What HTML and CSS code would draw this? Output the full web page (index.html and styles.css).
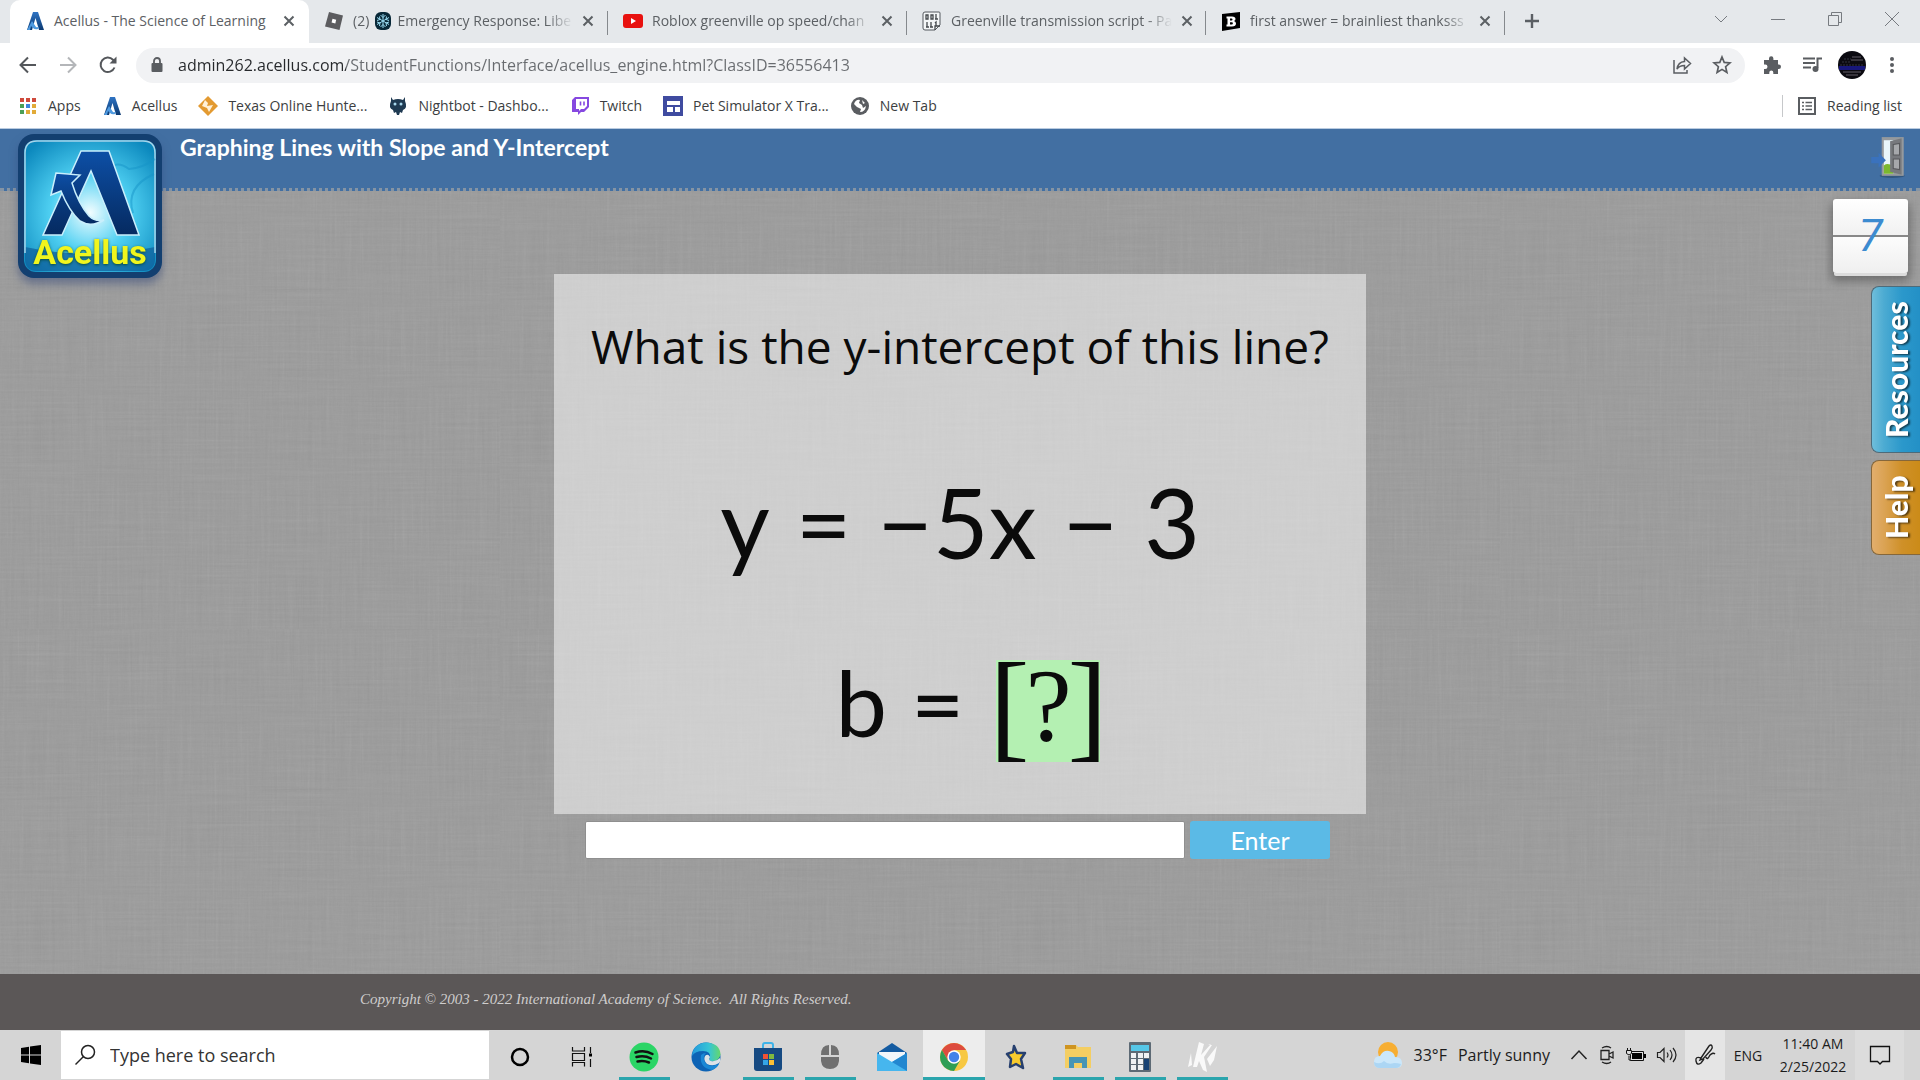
FILE: index.html
```html
<!DOCTYPE html>
<html lang="en">
<head>
    <meta charset="UTF-8">
    <meta name="viewport" content="width=device-width, initial-scale=1.0">
    <title>Acellus - The Science of Learning</title>
    <link rel="stylesheet" href="styles.css">
</head>
<body>
    <!-- Shared shapes -->
    <svg class="defs" width="0" height="0" aria-hidden="true">
        <defs>
            <linearGradient id="aBlue" x1="0" y1="0" x2="0" y2="1">
                <stop offset="0" stop-color="#2f74c4"/>
                <stop offset="1" stop-color="#0c3a72"/>
            </linearGradient>
            <symbol id="acellus" viewBox="0 0 18 20">
                <path d="M7 1h5l6 18h-5L9.500 7 6 19H1z" fill="url(#aBlue)"/>
                <path d="M1 19 6 10l4 6q2 1 3-1l-1 3q-3 1-5-1L5 15l-1 4z" fill="#4f9ae0"/>
            </symbol>
            <symbol id="close" viewBox="0 0 12 12">
                <path d="M1.500 1.500l9 9M10.500 1.500l-9 9" stroke="currentColor" stroke-width="2" fill="none"/>
            </symbol>
        </defs>
    </svg>

    <!-- Browser tabs -->
    <div class="tab-strip">
        <div class="tab active">
            <svg class="favicon"><use href="#acellus"/></svg>
            <span class="tab-title">Acellus - The Science of Learning</span>
            <button class="tab-close" aria-label="Close tab"><svg width="12" height="12"><use href="#close"/></svg></button>
        </div>
        <div class="tab">
            <svg class="favicon" viewBox="0 0 20 20"><path d="M5 1l14 3.500L15.500 19 1 15.500z" fill="#5c5c5f"/><path d="M8.500 7.800l3.700.9-.9 3.700-3.700-.9z" fill="#fff"/></svg>
            <span class="tab-title">(2) <svg class="snow" viewBox="0 0 16 18"><rect width="16" height="18" rx="6" fill="#082838"/><path d="M8 2v14M2 5.500l12 7M14 5.500l-12 7M5.500 3L8 5.500 10.500 3M5.500 15L8 12.500l2.500 2.500M2 8.500l3-1-.5-3M14 8.500l-3-1 .5-3M2 10l3 1-.5 3M14 10l-3 1 .5 3" stroke="#9bdcf2" fill="none"/></svg> Emergency Response: Libe</span>
            <button class="tab-close" aria-label="Close tab"><svg width="12" height="12"><use href="#close"/></svg></button>
        </div>
        <div class="tab">
            <svg class="favicon" viewBox="0 0 20 20"><rect y="3" width="20" height="14" rx="3" fill="#e8110f"/><path d="M8 7l5 3-5 3z" fill="#fff"/></svg>
            <span class="tab-title">Roblox greenville op speed/chan</span>
            <button class="tab-close" aria-label="Close tab"><svg width="12" height="12"><use href="#close"/></svg></button>
        </div>
        <div class="tab">
            <svg class="favicon" viewBox="0 0 20 20"><path d="M3 1h14q1 0 1 1v12l-5 5H3q-2 0-2-2V3q0-2 2-2z" fill="#f4f6f7" stroke="#55595e"/><path d="M4 4h2v4H4zM9 4h2v4H9zM14 3v5M13 8h3M5 11v5M4 16h3M9 11v5M8 16h3M13 12l1-1v4M13 19v-4h5" fill="none" stroke="#44484c" stroke-width="1.300"/></svg>
            <span class="tab-title">Greenville transmission script - Pa</span>
            <button class="tab-close" aria-label="Close tab"><svg width="12" height="12"><use href="#close"/></svg></button>
        </div>
        <div class="tab">
            <svg class="favicon" viewBox="0 0 20 20"><path d="M1 3l18-2v16L1 20z" fill="#000"/><path d="M5.500 5.500h5.500q3.500 0 3.500 2.500 0 1.500-1.500 2 2 .5 2 2.500 0 3-4 3H5.500v-2h1v-6h-1zM9 7.500v2h1.500q1 0 1-1t-1-1zm0 3.700v2.300h1.700q1.200 0 1.200-1.200t-1.200-1.100z" fill="#fff"/></svg>
            <span class="tab-title">first answer = brainliest thanksss</span>
            <button class="tab-close" aria-label="Close tab"><svg width="12" height="12"><use href="#close"/></svg></button>
        </div>
        <button class="new-tab" aria-label="New tab"><svg width="16" height="16" viewBox="0 0 16 16"><path d="M8 1v14M1 8h14" stroke="#5b5f64" stroke-width="2.400"/></svg></button>
        <div class="window-controls">
            <button aria-label="Search tabs"><svg width="16" height="16" viewBox="0 0 16 16"><path d="M2 5l6 6 6-6" fill="none" stroke="#777b80"/></svg></button>
            <button aria-label="Minimize"><svg width="16" height="16" viewBox="0 0 16 16"><path d="M1 8.500h14" stroke="#777b80"/></svg></button>
            <button aria-label="Restore"><svg width="16" height="16" viewBox="0 0 16 16"><path d="M1.500 4.500h10v10h-10zM4.500 4.500v-3h10v10h-3" fill="none" stroke="#777b80"/></svg></button>
            <button aria-label="Close"><svg width="16" height="16" viewBox="0 0 16 16"><path d="M1 1l14 14M15 1L1 15" stroke="#777b80"/></svg></button>
        </div>
    </div>

    <!-- Address bar -->
    <div class="toolbar">
        <button class="nav" aria-label="Back"><svg width="20" height="20" viewBox="0 0 20 20"><path d="M18 10H3M10 2.500L2.500 10l7.500 7.500" fill="none" stroke="#54575b" stroke-width="2"/></svg></button>
        <button class="nav" aria-label="Forward"><svg width="20" height="20" viewBox="0 0 20 20"><path d="M2 10h15M10 2.500l7.500 7.500-7.500 7.500" fill="none" stroke="#b4b6b9" stroke-width="2"/></svg></button>
        <button class="nav" aria-label="Reload"><svg width="20" height="20" viewBox="0 0 20 20"><path d="M16.500 12.500A7.200 7.200 0 1 1 15 4.800L17 7" fill="none" stroke="#54575b" stroke-width="2"/><path d="M18.500 1.500v7h-7z" fill="#54575b"/></svg></button>
        <div class="omnibox">
            <svg width="14" height="18" viewBox="0 0 14 18"><rect x="1.500" y="7" width="11" height="9" rx="1" fill="#5a5d61"/><path d="M4 8V5a3 3 0 0 1 6 0v3" fill="none" stroke="#5a5d61" stroke-width="1.800"/></svg>
            <input class="url" type="text" aria-label="Address" value="admin262.acellus.com/StudentFunctions/Interface/acellus_engine.html?ClassID=36556413">
            <button aria-label="Share"><svg width="20" height="20" viewBox="0 0 20 20"><path d="M2 5v13h13v-3M12.500 3v3.500Q6 7 5 14q2.500-3.500 7.500-3.500V14L18.500 8.500z" fill="none" stroke="#5a5d61" stroke-width="1.500"/></svg></button>
            <button aria-label="Bookmark"><svg width="20" height="20" viewBox="0 0 20 20"><path d="M10 2l2.200 5.400 5.800.5-4.400 3.800 1.300 5.700-4.900-3-4.900 3 1.300-5.700L2 7.900l5.800-.5z" fill="none" stroke="#5a5d61" stroke-width="1.700"/></svg></button>
        </div>
        <div class="tools">
            <button aria-label="Extensions"><svg width="20" height="20" viewBox="0 0 20 20"><path d="M2 5h5V3.500a2.200 2.200 0 0 1 4.400 0V5H16v4.500h.8a2.200 2.200 0 0 1 0 4.400H16V19h-4.700v-1.500a2 2 0 0 0-4 0V19H2v-5h1.300a2.200 2.200 0 0 0 0-4.400H2z" fill="#5a5d61"/></svg></button>
            <button aria-label="Media"><svg width="20" height="20" viewBox="0 0 20 20"><path d="M1 3.500h12M1 8h12M1 12.500h8" stroke="#5a5d61" stroke-width="2"/><path d="M15.500 13V3.500H20" fill="none" stroke="#5a5d61" stroke-width="2"/><circle cx="13.500" cy="14" r="3" fill="#5a5d61"/></svg></button>
            <button aria-label="Profile"><svg width="28" height="28" viewBox="0 0 28 28"><circle cx="14" cy="14" r="14" fill="#0b0a10"/><path d="M14 6h9M13 9h12M5 21h18M8 24h12" stroke="#454149" stroke-width="1.500"/><path d="M1 17h26" stroke="#17177a" stroke-width="4"/><path d="M6 8h7M4 11h9M2 14h24" stroke="#33333c" stroke-dasharray="2 1"/></svg></button>
            <button aria-label="Menu"><svg width="6" height="18" viewBox="0 0 6 18"><g fill="#5a5d61"><circle cx="3" cy="3" r="2"/><circle cx="3" cy="9" r="2"/><circle cx="3" cy="15" r="2"/></g></svg></button>
        </div>
    </div>

    <!-- Bookmarks -->
    <nav class="bookmarks">
        <a href="#"><svg viewBox="0 0 20 20"><path d="M2 2h4v4H2zM8 2h4v4H8zM14 2h4v4h-4z" fill="#cf4a3c"/><path d="M2 8h4v4H2z" fill="#4b9f57"/><path d="M8 8h4v4H8z" fill="#3d84dd"/><path d="M14 8h4v4h-4zM8 14h4v4H8zM14 14h4v4h-4z" fill="#e2ab38"/><path d="M2 14h4v4H2z" fill="#4b9f57"/></svg>Apps</a>
        <a href="#"><svg><use href="#acellus"/></svg>Acellus</a>
        <a href="#"><svg viewBox="0 0 20 20"><path d="M10 0l10 10-10 10L0 10z" fill="#e39a31"/><path d="M7 4l3 3-1 3 6-1-4 7-2-4-5-2z" fill="#fff1d8"/></svg>Texas Online Hunte...</a>
        <a href="#"><svg viewBox="0 0 20 20"><path d="M3 1l2 3q5-2 10 0l2-3v4q3 7-2 9l-1 3-2-1-1 3H9l-1-3-2 1-1-3q-5-2-2-9z" fill="#1f3a52"/><circle cx="7" cy="8" r="1.500" fill="#a9d8ee"/><circle cx="13" cy="8" r="1.500" fill="#a9d8ee"/></svg>Nightbot - Dashbo...</a>
        <a href="#"><svg viewBox="0 0 20 20"><path d="M5 1h14v10l-5 5h-3l-3 3v-3H2V4z" fill="#8648e0"/><path d="M6 3h11v7l-3 3h-3l-2 2v-2H6z" fill="#fff"/><path d="M10.500 5.500v4M14 5.500v4" stroke="#8648e0" stroke-width="1.600"/></svg>Twitch</a>
        <a href="#"><svg viewBox="0 0 20 20"><rect width="20" height="20" fill="#3f4ba0"/><path d="M4 5h13v4H4zM4 11h6v5H4zM12 11h5v5h-5z" fill="#fff"/></svg>Pet Simulator X Tra...</a>
        <a href="#"><svg viewBox="0 0 20 20"><circle cx="10" cy="10" r="9" fill="#5a5d61"/><path d="M4 8q2-5 6-4l-1 3 3 2 1 3 3-2q-1 6-6 6l1-3-4-2zM12 4l3 3-2 1z" fill="#fff"/></svg>New Tab</a>
        <button class="reading-list"><svg viewBox="0 0 20 20"><rect x="2" y="2" width="16" height="16" fill="none" stroke="#5a5d61" stroke-width="2"/><path d="M5 6.500h2M8.500 6.500H15M5 10h2M8.500 10H15M5 13.500h2M8.500 13.500H15" stroke="#5a5d61" stroke-width="1.600"/></svg>Reading list</button>
    </nav>

    <!-- Lesson -->
    <main class="lesson">
        <header class="lesson-header">
            <h1>Graphing Lines with Slope and Y-Intercept</h1>
            <button class="exit" aria-label="Exit"><svg width="36" height="44" viewBox="0 0 34 42"><ellipse cx="21" cy="39" rx="12" ry="2" fill="#33577f"/><path d="M11 2h21v37H11z" fill="#95999d"/><path d="M13 5h9v32h-9z" fill="#e9f6fb"/><path d="M13 29q4-3 9 1v7h-9z" fill="#7cb82f"/><path d="M19 6l11-3v35l-11-3z" fill="#77797d"/><path d="M22 9l6-1v11h-6zM22 23h6v10l-6-1z" fill="#a6a8ab" stroke="#58595c"/><path d="M1 21h7v-4l7 7-7 7v-4H1z" fill="#3a72bd"/></svg></button>
        </header>

        <a class="logo" href="#" aria-label="Acellus">
            <svg viewBox="0 0 146 146">
                <defs>
                    <radialGradient id="glow" cx=".5" cy=".55" r=".66">
                        <stop offset="0" stop-color="#f2fdff"/>
                        <stop offset=".45" stop-color="#4fd0f2"/>
                        <stop offset="1" stop-color="#0b88bd"/>
                    </radialGradient>
                    <linearGradient id="letter" x1="0" y1="0" x2="0" y2="1">
                        <stop offset="0" stop-color="#0d4fa6"/>
                        <stop offset="1" stop-color="#052a60"/>
                    </linearGradient>
                </defs>
                <rect x="1" y="1" width="144" height="144" rx="16" fill="#133f70"/>
                <rect x="7" y="7" width="132" height="132" rx="12" fill="url(#glow)"/>
                <path d="M8 114q65 14 130 0v12q0 12-12 12H20q-12 0-12-12z" fill="#0e5c9a" opacity=".7"/>
                <path d="M8 120V20Q8 8 20 8h106q12 0 12 12v100" fill="none" stroke="#a5d4ea" stroke-width="1.500"/>
                <path d="M92 34q10-6 20 2 14-1 26-10M116 80q-8-26 21-39" fill="none" stroke="#1593c8" stroke-width="2" opacity=".5"/>
                <path d="M64 18h28l30 84h-22L74 38 45 102H26z" fill="url(#letter)" stroke="#c9effc" stroke-width="1.500"/>
                <path d="M39 40l24 2-8 8q6 20 17 33 6 6 15 4-13 8-24 1Q52 78 44 58l-10 4z" fill="url(#letter)" stroke="#c9effc" stroke-width="1.500"/>
            </svg>
            <span>Acellus</span>
        </a>

        <div class="side">
            <div class="counter"><span>7</span></div>
            <button class="side-tab resources">Resources</button>
            <button class="side-tab help">Help</button>
        </div>

        <form class="question">
            <div class="card">
                <h2>What is the y-intercept of this line?</h2>
                <div class="equation">
                    <span>y</span><span>=</span><span>−5x</span><span>−</span><span>3</span>
                </div>
                <div class="equation answer-line">
                    <span>b</span><span>=</span>
                    <span class="blank"><span class="bracket">[</span><span>?</span><span class="bracket">]</span></span>
                </div>
            </div>
            <div class="answer">
                <input type="text" aria-label="Answer">
                <button type="button">Enter</button>
            </div>
        </form>
    </main>

    <footer class="copyright">Copyright © 2003 - 2022 International Academy of Science.&nbsp; All Rights Reserved.</footer>

    <!-- Taskbar -->
    <div class="taskbar">
        <button class="start" aria-label="Start"><svg width="20" height="20" viewBox="0 0 20 20"><path d="M0 3l8-1.200V9.500H0zM9 1.600L20 0v9.500H9zM0 10.500h8v7.700L0 17zM9 10.500h11V20L9 18.400z"/></svg></button>
        <div class="search">
            <svg width="22" height="22" viewBox="0 0 22 22"><circle cx="14" cy="8" r="6.500" fill="none" stroke="#222" stroke-width="1.500"/><path d="M9.500 12.500L1.500 20.500" stroke="#222" stroke-width="1.500"/></svg>
            <input type="text" aria-label="Search" placeholder="Type here to search">
        </div>
        <div class="apps">
            <button aria-label="Cortana"><svg viewBox="0 0 30 30"><circle cx="15" cy="15" r="8" fill="none" stroke="#000" stroke-width="2.500"/></svg></button>
            <button aria-label="Task view"><svg viewBox="0 0 30 30"><path d="M5.500 5v4h12V5M5.500 24.500v-4h12v4M5.500 11.500h12v7h-12zM23.500 5v6M23.500 17v8" fill="none" stroke="#111" stroke-width="1.200"/><path d="M22 11.500h3v3h-3z"/></svg></button>
            <button class="open" aria-label="Spotify"><svg viewBox="0 0 30 30"><circle cx="15" cy="15" r="14.500" fill="#2bd566"/><path d="M6.500 10.500q9-3 17 1.500M7.500 15q8-2 14.500 1.500M8.500 19.500q6-1.500 11.500 1" fill="none" stroke="#111" stroke-width="2.500" stroke-linecap="round"/></svg></button>
            <button aria-label="Edge"><svg viewBox="0 0 30 30"><defs><linearGradient id="edge" x1="0" x2="1"><stop offset="0" stop-color="#2499dc"/><stop offset=".6" stop-color="#37c4d5"/><stop offset="1" stop-color="#65d86b"/></linearGradient></defs><circle cx="15" cy="15" r="14.500" fill="#0d63b5"/><path d="M1 14Q2 1 16 .5q13 1 13.500 12Q28 20 20 19q-3-1-1-3 1-7-7-7Q4 9 1 14z" fill="url(#edge)"/><path d="M10 13q-2 13 11 15 5-2 7-6-12 5-15-4-1-4 2-7-3 0-5 2z" fill="#1a88d6"/><path d="M14 14q3-3 5 1-2 3 1 4 5 1 9-3 1 3-1 5-6 4-12 1-4-4-2-8z" fill="#dbe3e8"/></svg></button>
            <button class="open" aria-label="Microsoft Store"><svg viewBox="0 0 30 30"><path d="M10 6V3q0-2 2-2h6q2 0 2 2v3" fill="none" stroke="#3eb3e8" stroke-width="2"/><path d="M1 6h28v20q0 3-3 3H4q-3 0-3-3z" fill="#164a82"/><path d="M10 12h5v5h-5z" fill="#f05133"/><path d="M16 12h5v5h-5z" fill="#7fba3f"/><path d="M10 18h5v5h-5z" fill="#35a5e6"/><path d="M16 18h5v5h-5z" fill="#fbc034"/></svg></button>
            <button class="open" aria-label="Mouse"><svg viewBox="0 0 30 30"><path d="M14 3v10H6q0-10 8-10zM16 3q8 0 8 10h-8zM6 15h18v4q-1 8-9 8t-9-8z" fill="#707070"/></svg></button>
            <button aria-label="Mail"><svg viewBox="0 0 30 30"><path d="M0 11L15 1l15 10v8H0z" fill="#145ba1"/><path d="M2 10h26v12H2z" fill="#f2f6fa"/><path d="M0 11l15 9 15-9v18H0z" fill="#46b6ee"/><path d="M15 20l15 9V11z" fill="#2287d0"/></svg></button>
            <button class="open current" aria-label="Chrome"><svg viewBox="0 0 30 30"><circle cx="15" cy="15" r="14" fill="#f7c843"/><path d="M2.900 8A14 14 0 0 1 27.100 8H15L9 18.500z" fill="#dd4b3e"/><path d="M2.900 8A14 14 0 0 0 15 29l6-10.500q-6 5-12 0z" fill="#2f9e55"/><circle cx="15" cy="15" r="6.700" fill="#fff"/><circle cx="15" cy="15" r="5.200" fill="#4382ea"/></svg></button>
            <button aria-label="Star"><svg viewBox="0 0 30 30"><path d="M13 4l3 7 8 0-4 6 2 9-7-4-6 3 1-8-4-5 6-2z" fill="#f8cb2e" stroke="#27406f" stroke-width="2.500" stroke-linejoin="round"/></svg></button>
            <button class="open" aria-label="File Explorer"><svg viewBox="0 0 30 30"><path d="M2 3h11l2 2h13v21H2z" fill="#f4ce62"/><path d="M2 3h11v4H2z" fill="#cf9420"/><path d="M6 26V15h18v11h-5v-5h-8v5z" fill="#4795b5"/></svg></button>
            <button class="open" aria-label="Calculator"><svg viewBox="0 0 30 30"><rect x="4" width="22" height="30" rx="1" fill="#5d6a75"/><path d="M6 3h18v6H6z" fill="#55c7e8"/><path d="M6 11h5v5H6zM13 11h5v5h-5zM19 11h5v5h-5zM6 17h5v5H6zM13 17h5v5h-5zM6 23h5v5H6zM13 23h5v5h-5z" fill="#eef1f3"/><path d="M19 17h5v11h-5z" fill="#164173"/></svg></button>
            <button class="open" aria-label="K app"><svg viewBox="0 0 30 30"><path d="M4 11L1 25l4-2zM12 0l5 2-3 11 10-11-3 1 4 0-8 12 3 15-4-2-4-9-2 6-4 0zM30 4l-3 14-4 6-3-7z" fill="#f9f9f9"/></svg></button>
        </div>
        <div class="tray">
            <button class="weather"><svg width="30" height="28" viewBox="0 0 30 28"><circle cx="15" cy="11" r="10" fill="#f7ae32"/><path d="M7 27q-6 0-6-6t6-6q3-6 9-5 5 1 6 6 7 0 7 6 0 5-6 5z" fill="#cbe7fa"/><path d="M7 27q-6 0-6-6 6 3 10-1 4 4 10 2 4 0 7 1-1 4-5 4z" fill="#acd6f4"/></svg><span>33°F</span><span>Partly sunny</span></button>
            <button aria-label="Hidden icons"><svg width="18" height="18" viewBox="0 0 18 18"><path d="M1.500 13L9 5l7.500 8" fill="none" stroke="#222" stroke-width="1.500"/></svg></button>
            <button aria-label="Meet now"><svg width="18" height="20" viewBox="0 0 18 20"><path d="M3 5.500h8v9H3zM11 9l4-2v6l-4-2M4 3q5-3 9 0M4 17q5 3 9 0" fill="none" stroke="#222" stroke-width="1.300"/></svg></button>
            <button aria-label="Battery"><svg width="20" height="16" viewBox="0 0 20 16"><path d="M4.500 4.500h13v9h-13z" fill="#ddd" stroke="#111"/><path d="M6 6h10v6H6zM18 7h2v4h-2z"/><path d="M.5 3.500h5v3q-2.500 3-5 0zM1.500 1v2.500M4.500 1v2.500M3 9v4h2" fill="#ddd" stroke="#111"/></svg></button>
            <button aria-label="Volume"><svg width="22" height="18" viewBox="0 0 22 18"><path d="M1.500 6.500H4l4-4v13l-4-4H1.500zM11 6.500q2 2.500 0 5M14 4q4 5 0 10M17 2q6 7 0 14" fill="none" stroke="#222" stroke-width="1.200"/></svg></button>
            <button class="ink" aria-label="Windows Ink"><svg width="22" height="22" viewBox="0 0 22 22"><path d="M7 14L15 2q2-2 3 0t-1 4l-8 9-3 1zM7 14q-6-2-5 3t5 2l3-4M12 13q1 4 4-2 3-3 5-1" fill="none" stroke="#222" stroke-width="1.400"/></svg></button>
            <button class="lang">ENG</button>
            <button class="clock"><span>11:40 AM</span><span>2/25/2022</span></button>
            <button class="notify" aria-label="Notifications"><svg width="22" height="22" viewBox="0 0 22 22"><path d="M1.500 2.500h19v15h-7L11 20l-2.500-2.500h-7z" fill="none" stroke="#111" stroke-width="1.300"/></svg></button>
        </div>
    </div>
</body>
</html>
```

FILE: styles.css
```css
* {
    margin: 0;
    padding: 0;
    box-sizing: border-box;
}

body {
    font-family: 'Open Sans', sans-serif;
    min-height: 100vh;
    display: flex;
    flex-direction: column;
    background: #fff;
    color: #333;
}

button {
    font: inherit;
    color: inherit;
    border: none;
    background: none;
    display: flex;
    align-items: center;
    justify-content: center;
}

input {
    font: inherit;
    border: none;
    outline: none;
    min-width: 0;
}

a {
    color: inherit;
    text-decoration: none;
}

.defs {
    position: absolute;
}

/* Tabs */
.tab-strip {
    display: flex;
    height: 43px;
    padding-left: 10px;
    background: #e5e8eb;
    font-size: 14px;
    color: #5c6064;
}

.tab {
    flex: 0 1 299px;
    min-width: 0;
    display: flex;
    align-items: center;
    gap: 9px;
    padding: 0 14px 2px 15px;
    background: linear-gradient(#85898d, #85898d) right 11px / 1px 24px no-repeat;
}

.tab.active {
    background: #fff;
    border-radius: 10px 10px 0 0;
}

.favicon {
    flex: none;
    width: 20px;
    height: 20px;
}

.tab-title {
    flex: 1;
    white-space: nowrap;
    -webkit-mask-image: linear-gradient(to right, #000 88%, transparent);
    mask-image: linear-gradient(to right, #000 88%, transparent);
}

.active .tab-title {
    -webkit-mask-image: none;
    mask-image: none;
}

.snow {
    width: 16px;
    height: 18px;
    margin: 0 3px 0 2px;
    vertical-align: -4px;
}

.tab-close {
    flex: none;
    width: 12px;
}

.new-tab {
    width: 54px;
    padding-bottom: 2px;
}

.window-controls {
    display: flex;
    margin-left: auto;
    padding-bottom: 6px;
}

.window-controls button {
    width: 57px;
}

/* Toolbar */
.toolbar {
    display: flex;
    align-items: center;
    height: 44px;
    padding-left: 8px;
}

.nav {
    width: 40px;
}

.omnibox {
    flex: 1;
    display: flex;
    align-items: center;
    gap: 14px;
    height: 35px;
    margin-left: 8px;
    padding: 0 10px 0 14px;
    border-radius: 18px;
    background: #f1f2f4;
}

.omnibox button {
    width: 26px;
}

/* The domain is drawn darker than the rest of the address */
.url {
    flex: 1;
    font-size: 16px;
    color: transparent;
    background: linear-gradient(to right, #26282b 168px, #686b6f 168px);
    -webkit-background-clip: text;
    background-clip: text;
}

.tools {
    display: flex;
    align-items: center;
    padding-right: 8px;
    padding-left: 7px;
}

.tools button {
    width: 40px;
}

/* Bookmarks */
.bookmarks {
    display: flex;
    align-items: center;
    gap: 21px;
    height: 42px;
    padding: 0 18px 4px;
    font-size: 14px;
    color: #3c3e41;
    border-bottom: 1px solid #b9cbe0;
}

.bookmarks a,
.reading-list {
    display: flex;
    align-items: center;
    gap: 10px;
    white-space: nowrap;
}

.bookmarks svg {
    flex: none;
    width: 20px;
    height: 20px;
}

.reading-list {
    margin-left: auto;
    padding: 1px 0 1px 14px;
    border-left: 1px solid #c6c8ca;
}

/* Lesson */
.lesson {
    position: relative;
    flex: 1;
    background-color: #999;
    background-image:
        url("data:image/svg+xml,%3Csvg xmlns='http://www.w3.org/2000/svg' width='500' height='500'%3E%3Cfilter id='h'%3E%3CfeTurbulence type='fractalNoise' baseFrequency='.012 .4' numOctaves='3' stitchTiles='stitch'/%3E%3CfeColorMatrix type='saturate' values='0'/%3E%3C/filter%3E%3Crect width='500' height='500' filter='url(%23h)' opacity='.1'/%3E%3C/svg%3E"),
        url("data:image/svg+xml,%3Csvg xmlns='http://www.w3.org/2000/svg' width='500' height='500'%3E%3Cfilter id='v'%3E%3CfeTurbulence type='fractalNoise' baseFrequency='.4 .012' numOctaves='3' stitchTiles='stitch'/%3E%3CfeColorMatrix type='saturate' values='0'/%3E%3C/filter%3E%3Crect width='500' height='500' filter='url(%23v)' opacity='.1'/%3E%3C/svg%3E");
}

.lesson-header {
    display: flex;
    justify-content: space-between;
    align-items: flex-start;
    height: 62px;
    padding: 4px 14px 0 180px;
    background: #426fa2;
    border-bottom: 3px dotted #8594a4;
}

.lesson-header h1 {
    font-family: Lato, sans-serif;
    font-size: 23px;
    line-height: 28px;
    font-weight: 700;
    color: #fff;
}

.exit {
    padding-top: 2px;
}

.logo {
    position: absolute;
    top: 4px;
    left: 17px;
    width: 146px;
    height: 146px;
    filter: drop-shadow(0 6px 4px rgba(50, 70, 120, 0.5));
}

.logo svg {
    display: block;
}

.logo span {
    position: absolute;
    left: 0;
    right: 0;
    bottom: 9px;
    text-align: center;
    font: 700 34px/36px Roboto, sans-serif;
    color: #f0f51e;
    text-shadow: 0 1px 3px #0a4b3a;
}

.side {
    position: absolute;
    top: 70px;
    right: 0;
    display: flex;
    flex-direction: column;
    align-items: flex-end;
    gap: 7px;
}

.counter {
    display: flex;
    align-items: center;
    justify-content: center;
    width: 75px;
    height: 74px;
    margin: 0 12px 6px 0;
    border-radius: 3px;
    background: linear-gradient(#fff, #f1f1f1 36px, #888 36px, #888 38px, #fcfcfc 38px, #efefef);
    box-shadow: 0 4px 0 -1px #dcdcdc, 0 6px 10px 2px rgba(0, 0, 0, 0.3);
    font: italic 44px/44px Roboto, sans-serif;
    color: #3c8bd0;
}

.side-tab {
    width: 49px;
    padding-right: 0;
    border: 1px solid #4d6b7a;
    border-left: none;
    border-radius: 0 8px 8px 0;
    font: 900 30px/36px Lato, sans-serif;
    color: #fff;
    text-shadow: -1px 2px 2px rgba(0, 0, 0, 0.6);
    writing-mode: vertical-rl;
    transform: rotate(180deg);
}

.resources {
    height: 167px;
    background: linear-gradient(to left, #6fbedb, #4cabd2 12px, #2b98cb 30px, #2390c6);
}

.help {
    height: 95px;
    border-color: #86673a;
    background: linear-gradient(to left, #e2ae6d, #dba354 12px, #cf9028 30px, #cb8b18);
}

.question {
    display: flex;
    flex-direction: column;
    align-items: center;
    gap: 7px;
    padding-top: 83px;
}

.card {
    display: flex;
    flex-direction: column;
    align-items: center;
    width: 812px;
    padding: 40px 20px 52px;
    background: rgba(255, 255, 255, 0.51);
    color: #0b0b0b;
}

.card h2 {
    font-size: 46px;
    line-height: 64px;
    font-weight: 400;
    margin-bottom: 84px;
}

.equation {
    display: flex;
    align-items: center;
    gap: 26px;
    font: 96px/120px Lato, sans-serif;
    margin-bottom: 65px;
}

.answer-line {
    align-items: flex-start;
    gap: 24px;
    padding-left: 16px;
    font-size: 92px;
    line-height: 110px;
    margin-bottom: 0;
}

.blank {
    display: flex;
    align-items: center;
    justify-content: center;
    width: 104px;
    height: 102px;
    margin: 13px 0 0 8px;
    padding-bottom: 10px;
    background: #b4f0b2;
    font: 104px/102px 'Liberation Serif', serif;
}

.bracket {
    margin: 0 -4px;
    font-size: 120px;
}

.answer {
    display: flex;
    gap: 5px;
    padding-right: 5px;
}

.answer input {
    width: 600px;
    height: 38px;
    padding: 0 10px;
    border: 1px solid #8f8f8f;
    border-radius: 2px;
    background: #fff;
    font-size: 24px;
}

.answer button {
    width: 140px;
    height: 38px;
    border-radius: 3px;
    background: #5bbae6;
    color: #fff;
    font: 25px/30px Lato, sans-serif;
}

/* Footer */
.copyright {
    height: 56px;
    padding: 14px 0 0 360px;
    background: #5b5757;
    color: #cfcdcd;
    font: italic 15px/22px Georgia, 'Liberation Serif', serif;
}

/* Taskbar */
.taskbar {
    display: flex;
    height: 50px;
    background: #d5d5d5;
    color: #1c1c1c;
}

.start {
    width: 61px;
}

.search {
    flex: 0 1 428px;
    display: flex;
    align-items: center;
    gap: 14px;
    margin: 1px 0;
    padding: 0 13px;
    background: #fff;
}

.search input {
    flex: 1;
    font-size: 18px;
}

.search input::placeholder {
    color: #333;
}

.apps {
    display: flex;
}

.apps button {
    width: 62px;
    border-top: 3px solid transparent;
}

.apps svg {
    width: 30px;
    height: 30px;
}

.apps .open {
    background: linear-gradient(#2ba5ad, #2ba5ad) center bottom / 51px 3px no-repeat;
}

.apps .current {
    border-top: none;
    padding-top: 3px;
    background: linear-gradient(#2ba5ad, #2ba5ad) center bottom / 100% 3px no-repeat, #ededed;
}

.tray {
    display: flex;
    margin-left: auto;
    padding-right: 16px;
}

.tray button {
    padding: 0 5px;
}

.tray .weather {
    gap: 11px;
    padding-right: 15px;
    font-size: 16px;
    white-space: nowrap;
}

.tray .ink {
    width: 40px;
    margin-left: 2px;
    background: #e5e5e5;
}

.tray .lang {
    width: 46px;
    font-size: 14px;
}

.tray .clock {
    width: 84px;
    flex-direction: column;
    font-size: 14px;
    line-height: 23px;
    padding: 0;
}

.tray .notify {
    width: 49px;
    background: #dcdcdc;
}
```
